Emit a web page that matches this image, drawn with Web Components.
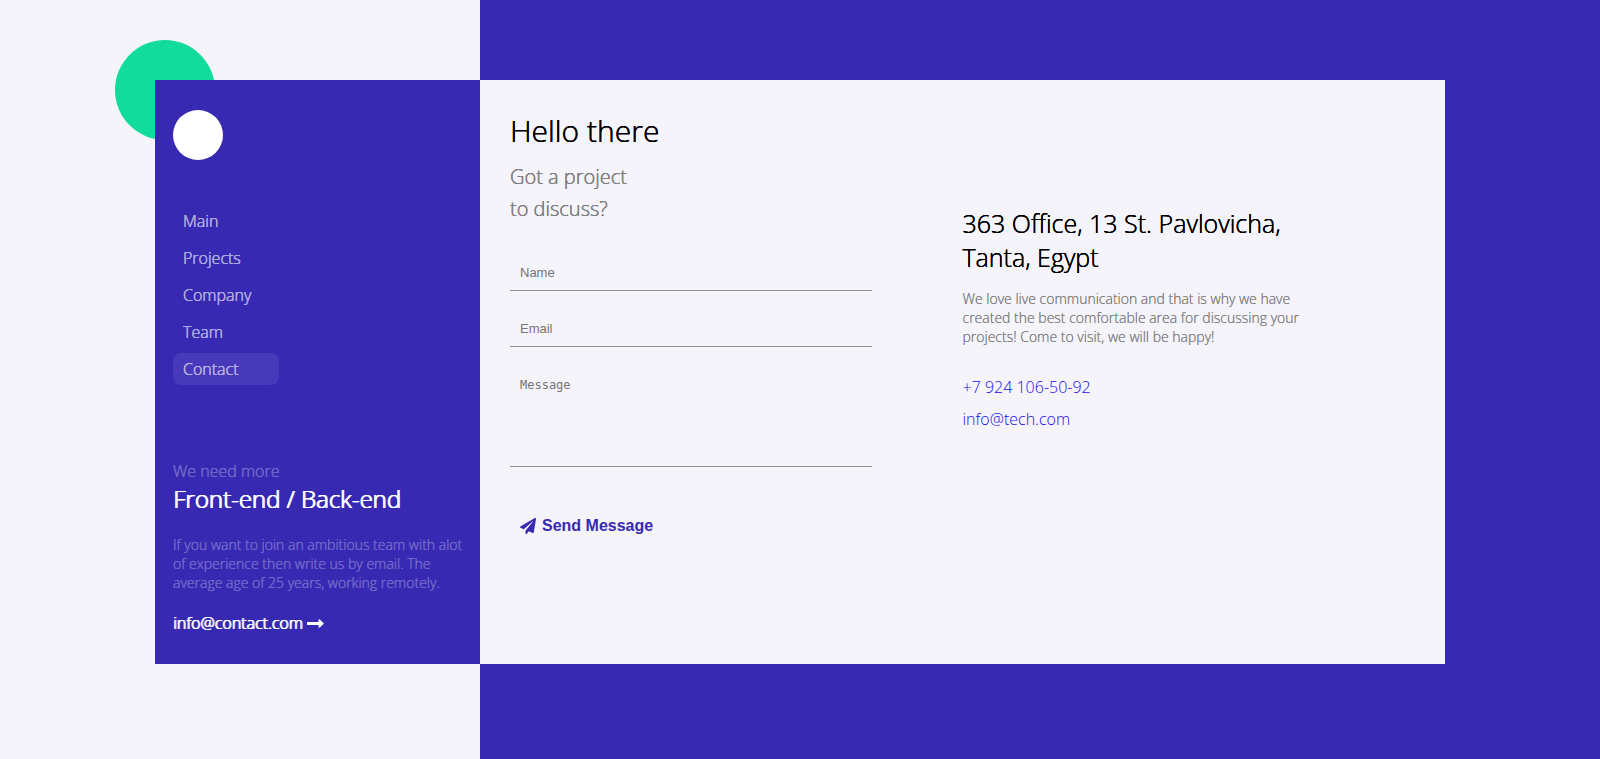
<!DOCTYPE html>
<html lang="en">
<head>
<meta charset="utf-8">
<title>Contact</title>
<style>
  :root {
    --brand: #3829b3;
    --paper: #f5f4fb;
    --accent: #11dc9b;
    --muted: #808080;
  }
  html { height: 100%; }
  body {
    margin: 0;
    min-height: 100%;
    font: 300 16px/22px "Open Sans", sans-serif;
    background: linear-gradient(to right, var(--paper) 30%, var(--brand) 30%);
  }
</style>
</head>
<body>
<contact-page>
  <side-bar slot="side">
    <side-link href="#main">Main</side-link>
    <side-link href="#projects">Projects</side-link>
    <side-link href="#company">Company</side-link>
    <side-link href="#team">Team</side-link>
    <side-link href="#contact" active>Contact</side-link>
    <job-note slot="foot"></job-note>
  </side-bar>
  <contact-form></contact-form>
  <office-info></office-info>
</contact-page>

<script>
const define = (name, html, setup) => customElements.define(name, class extends HTMLElement {
  constructor() {
    super();
    this.attachShadow({ mode: "open" }).innerHTML = html;
  }
  connectedCallback() { if (setup) setup(this, this.shadowRoot); }
});

define("contact-page", `
  <style>
    :host { display: block; padding: 80px 155px; }
    .wrap { position: relative; }
    .dot {
      position: absolute; left: -40px; top: -40px;
      width: 100px; height: 100px; border-radius: 50%; background: var(--accent);
    }
    .card { position: relative; display: flex; }
    .side { width: calc(30vw - 155px); flex: none; background: var(--brand); display: flex; }
    main {
      flex: 1; min-width: 0; padding: 30px; background: var(--paper);
      display: grid; grid-template-columns: 1fr 1fr;
    }
  </style>
  <div class="wrap">
    <div class="dot"></div>
    <div class="card">
      <div class="side"><slot name="side"></slot></div>
      <main><slot></slot></main>
    </div>
  </div>`);

define("side-bar", `
  <style>
    :host { display: flex; flex: 1; flex-direction: column; padding: 30px 16px 30px 18px; color: #fff; }
    .logo { width: 50px; height: 50px; border-radius: 50%; background: #fff; margin-bottom: 45px; }
    nav { display: flex; flex-direction: column; gap: 5px; width: 106px; margin-bottom: 75px; }
  </style>
  <div class="logo"></div>
  <nav><slot></slot></nav>
  <slot name="foot"></slot>`);

define("side-link", `
  <style>
    :host { display: block; border-radius: 8px; }
    :host([active]) { background: rgba(255, 255, 255, .08); }
    a {
      display: block; padding: 5px 10px; color: #fff;
      text-decoration: none; opacity: .6; text-shadow: 0 0 0 currentColor, 0 0 0 currentColor;
    }
  </style>
  <a><slot></slot></a>`, (el, root) => { root.querySelector("a").href = el.getAttribute("href"); });

define("job-note", `
  <style>
    :host { display: block; }
    p { margin: 0; opacity: .3; text-shadow: 0 0 0 currentColor; }
    h2 { margin: 0 0 19px; font-size: 24px; line-height: 34px; font-weight: 300; text-shadow: 0 0 0 currentColor, 1px 0 0 currentColor; }
    .text { font-size: 14px; line-height: 19px; margin-bottom: 20px; }
    a {
      color: #fff; text-decoration: none; display: flex; align-items: center; gap: 4px;
      text-shadow: 0 0 0 currentColor, 1px 0 0 currentColor;
    }
  </style>
  <p>We need more</p>
  <h2>Front-end / Back-end</h2>
  <p class="text">If you want to join an ambitious team with alot of experience then write us by email. The average age of 25 years, working remotely.</p>
  <a href="mailto:info@contact.com">info@contact.com
    <svg width="17" height="9" viewBox="0 0 17 9" fill="#fff" aria-hidden="true"><path d="M0 3h11.500V1q0-1 1-.7L16.500 4q.5.5 0 1l-4 3.700q-1 .3-1-.7V6H0z"/></svg>
  </a>`);

define("contact-form", `
  <style>
    :host { display: block; }
    h1 { margin: 0 0 9px; font-size: 30px; line-height: 42px; font-weight: 300; text-shadow: 0 0 0 currentColor, 0 0 0 currentColor; }
    .lead { margin: 0 0 30px; font-size: 20px; line-height: 32px; color: var(--muted); text-shadow: 0 0 0 currentColor, 0 0 0 currentColor; }
    form { display: flex; flex-direction: column; gap: 20px; width: 80%; }
    input, textarea {
      box-sizing: border-box; width: 100%; height: 36px; padding: 10px; margin: 0; border: 0;
      border-bottom: 1px solid #929196; background: none; outline: 0; resize: none; display: block;
      font: 13px/15px "Liberation Sans", sans-serif; color: #000;
    }
    textarea { height: 100px; padding-top: 11px; font: 12px/15px "DejaVu Sans Mono", monospace; }
    ::placeholder { color: #757575; opacity: 1; }
    button {
      align-self: flex-start; display: flex; align-items: center; gap: 6px; margin-top: 20px;
      padding: 10px; border: 0; background: none; color: var(--brand);
      font: bold 16px/18px "Liberation Sans", sans-serif;
    }
  </style>
  <h1>Hello there</h1>
  <p class="lead">Got a project<br>to discuss?</p>
  <form>
    <input type="text" placeholder="Name" aria-label="Name">
    <input type="email" placeholder="Email" aria-label="Email">
    <textarea placeholder="Message" aria-label="Message"></textarea>
    <button type="button"><svg width="16" height="16" viewBox="0 0 512 512" fill="currentColor" aria-hidden="true"><path d="M476 3.200L12.500 270.600c-18.100 10.400-15.800 35.600 2.200 43.200L121 358.400l287.300-253.200c5.500-4.900 13.300 2.600 8.600 8.300L176 407v80.500c0 23.600 28.500 32.900 42.500 15.800L282 426l124.600 52.200c14.200 6 30.400-2.900 33-18.200l72-432C515 7.800 493.300-6.800 476 3.200z"/></svg>Send Message</button>
  </form>`);

define("office-info", `
  <style>
    :host { display: block; width: 80%; padding-top: 96px; }
    h2 { margin: 0 0 15px; font-size: 25px; line-height: 34px; font-weight: 300; text-shadow: 0 0 0 currentColor, 0 0 0 currentColor; }
    p { margin: 0 0 30px; font-size: 14px; line-height: 19px; color: var(--muted); text-shadow: 0 0 0 currentColor; }
    address { font-style: normal; display: flex; flex-direction: column; align-items: flex-start; gap: 10px; }
    a { color: #1a0eee; text-decoration: none; }
  </style>
  <h2>363 Office, 13 St. Pavlovicha, Tanta, Egypt</h2>
  <p>We love live communication and that is why we have created the best comfortable area for discussing your projects! Come to visit, we will be happy!</p>
  <address><a href="tel:+79241065092">+7 924 106-50-92</a><a href="mailto:info@tech.com">info@tech.com</a></address>`);
</script>
</body>
</html>
